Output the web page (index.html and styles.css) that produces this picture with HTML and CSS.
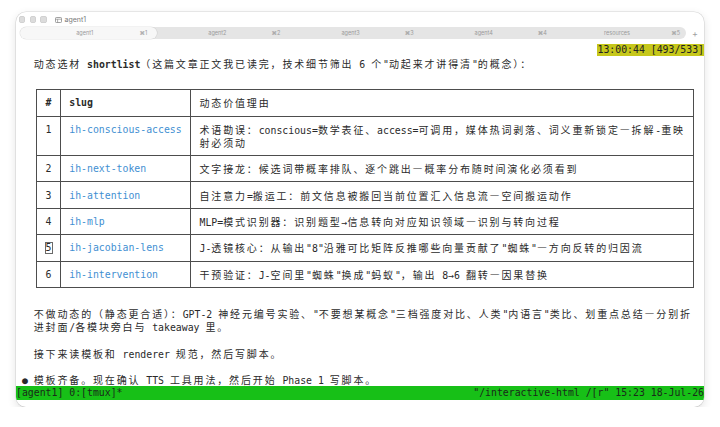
FILE: index.html
```html
<!DOCTYPE html>
<html lang="zh-CN">
<head>
<meta charset="utf-8">
<title>agent1</title>
<link rel="stylesheet" href="styles.css">
</head>
<body>
<div class="window">
  <div class="titlebar">
    <div class="lights"><span class="light"></span><span class="light"></span><span class="light"></span></div>
    <svg class="title-icon" width="7" height="6" viewBox="0 0 7 6"><rect x="0.5" y="0.5" width="6" height="5" rx="0.8" fill="none" stroke="#8a8a8a" stroke-width="0.8"/><path d="M0.5 2.2h6M2.6 2.2v3.3" stroke="#8a8a8a" stroke-width="0.7"/></svg>
    <span class="title">agent1</span>
  </div>
  <div class="tabbar">
    <div class="tabs">
      <div class="tab active"><span class="tab-name">agent1</span><span class="tab-key">⌘1</span></div>
      <div class="tab"><span class="tab-name">agent2</span><span class="tab-key">⌘2</span></div>
      <div class="tab"><span class="tab-name">agent3</span><span class="tab-key">⌘3</span></div>
      <div class="tab"><span class="tab-name">agent4</span><span class="tab-key">⌘4</span></div>
      <div class="tab"><span class="tab-name">resources</span><span class="tab-key">⌘5</span></div>
    </div>
    <span class="plus">+</span>
  </div>
  <div class="term">
<div class="line mode-row"><span class="mode">13:00:44 [493/533]</span></div>
<div class="line">   <span class="w">动态选材</span> <b>shortlist</b><span class="w">（这篇文章正文我已读完，技术细节筛出</span> 6 <span class="w">个</span>"<span class="w">动起来才讲得清</span>"<span class="w">的概念）：</span></div>
<div class="line"></div>
<div class="tbl">
<div class="cell hd"><div class="tl">#</div></div><div class="cell hd"><div class="tl">slug</div></div><div class="cell hd"><div class="tl"><span class="w">动态价值理由</span></div></div>
<div class="cell"><div class="tl">1</div></div><div class="cell slug"><div class="tl">ih-conscious-access</div></div><div class="cell"><div class="tl"><span class="w">术语勘误：</span>conscious=<span class="w">数学表征、</span>access=<span class="w">可调用，媒体热词剥落、词义重新锁定—拆解</span>-<span class="w">重映</span></div><div class="tl"><span class="w">射必须动</span></div></div>
<div class="cell"><div class="tl">2</div></div><div class="cell slug"><div class="tl">ih-next-token</div></div><div class="cell"><div class="tl"><span class="w">文字接龙：候选词带概率排队、逐个跳出—概率分布随时间演化必须看到</span></div></div>
<div class="cell"><div class="tl">3</div></div><div class="cell slug"><div class="tl">ih-attention</div></div><div class="cell"><div class="tl"><span class="w">自注意力</span>=<span class="w">搬运工：前文信息被搬回当前位置汇入信息流—空间搬运动作</span></div></div>
<div class="cell"><div class="tl">4</div></div><div class="cell slug"><div class="tl">ih-mlp</div></div><div class="cell"><div class="tl">MLP=<span class="w">模式识别器：识别题型</span>→<span class="w">信息转向对应知识领域—识别与转向过程</span></div></div>
<div class="cell"><div class="tl"><span class="cursor">5</span></div></div><div class="cell slug"><div class="tl">ih-jacobian-lens</div></div><div class="cell"><div class="tl">J-<span class="w">透镜核心：从输出</span>"8"<span class="w">沿雅可比矩阵反推哪些向量贡献了</span>"<span class="w">蜘蛛</span>"<span class="w">—方向反转的归因流</span></div></div>
<div class="cell"><div class="tl">6</div></div><div class="cell slug"><div class="tl">ih-intervention</div></div><div class="cell"><div class="tl"><span class="w">干预验证：</span>J-<span class="w">空间里</span>"<span class="w">蜘蛛</span>"<span class="w">换成</span>"<span class="w">蚂蚁</span>"<span class="w">，输出</span> 8→6 <span class="w">翻转—因果替换</span></div></div>
</div>
<div class="line"></div>
<div class="line">   <span class="w">不做动态的（静态更合适）：</span>GPT-2 <span class="w">神经元编号实验、</span>"<span class="w">不要想某概念</span>"<span class="w">三档强度对比、人类</span>"<span class="w">内语言</span>"<span class="w">类比、划重点总结—分别折</span></div>
<div class="line">   <span class="w">进封面</span>/<span class="w">各模块旁白与</span> takeaway <span class="w">里。</span></div>
<div class="line"></div>
<div class="line">   <span class="w">接下来读模板和</span> renderer <span class="w">规范，然后写脚本。</span></div>
<div class="line"></div>
<div class="line"> ● <span class="w">模板齐备。现在确认</span> TTS <span class="w">工具用法，然后开始</span> Phase 1 <span class="w">写脚本。</span></div>
<div class="line status"><span>[agent1] 0:[tmux]*</span><span>"/interactive-html /[r" 15:23 18-Jul-26</span></div>
  </div>
</div>
</body>
</html>
```
FILE: styles.css
```css
* { box-sizing: border-box; }
html, body { margin: 0; padding: 0; background: #ffffff; }
body {
  padding: 12px 16px 0 16px;
  font-family: "DejaVu Sans Mono", "Noto Sans CJK SC", monospace;
}
.window {
  width: 688px;
  height: 395px;
  border-radius: 10px;
  background: #ffffff;
  box-shadow: 0 0 0 0.5px rgba(0, 0, 0, 0.14), 0 3px 10px rgba(0, 0, 0, 0.12);
  overflow: hidden;
  display: flex;
  flex-direction: column;
}
.titlebar {
  height: 14px;
  padding-top: 1px;
  display: flex;
  align-items: center;
  padding-left: 3px;
}
.lights { display: flex; gap: 4.5px; }
.light {
  width: 6.2px;
  height: 6.2px;
  border-radius: 50%;
  background: #dcdcdc;
  box-shadow: inset 0 0 0 0.5px #c6c6c6;
}
.title-icon { margin-left: 8px; }
.title {
  margin-left: 3px;
  font: 7px "Inter", "Noto Sans", sans-serif;
  color: #7a7a7a;
}
.tabbar {
  height: 14px;
  display: flex;
  align-items: center;
  padding-left: 4px;
}
.tabs {
  width: 666px;
  height: 11.5px;
  border-radius: 6px;
  background: #e5e5e5;
  display: flex;
}
.tab {
  flex: 1;
  display: flex;
  align-items: center;
  padding-right: 6px;
  font: 5.5px "Inter", "Noto Sans", sans-serif;
  color: #9a9a9a;
}
.tab.active {
  background: #f7f7f7;
  border-radius: 6px;
  box-shadow: 0 0 0 0.5px rgba(0, 0, 0, 0.1);
  margin-right: -4px;
  padding-right: 10px;
  position: relative;
}
.tab-name { flex: 1; text-align: center; padding-left: 10px; }
.plus {
  width: 18px;
  text-align: center;
  font: 9px "Inter", "Noto Sans", sans-serif;
  color: #a0a0a0;
}
.term {
  padding-top: 3.5px;
  font-size: 9.83px;
  color: #2a2a2a;
}
.line {
  height: 13.2px;
  line-height: 13.2px;
  white-space: pre;
}
.w {
  font-family: "Noto Sans CJK SC", sans-serif;
  font-size: 10px;
  letter-spacing: 1.84px;
}
b { font-weight: bold; }
.mode-row { display: flex; justify-content: flex-end; }
.mode {
  background: #c6c71a;
  color: #222;
  height: 12.5px;
  line-height: 12.5px;
}
.tbl {
  margin: 6.1px 0 6.1px 20.22px;
  width: 658.12px;
  display: grid;
  grid-template-columns: 23.68px 130.24px 503.2px;
  border-right: 1px solid #4d4d4d;
  border-bottom: 1px solid #4d4d4d;
}
.cell {
  border-left: 1px solid #4d4d4d;
  border-top: 1px solid #4d4d4d;
  padding: 6.1px 0 6.1px 8.38px;
  white-space: pre;
}
.tl {
  height: 13.2px;
  line-height: 13.2px;
}
.hd { font-weight: bold; }
.hd .w { font-weight: normal; }
.slug { color: #3f8fd2; }
.cursor {
  display: inline-block;
  height: 10px;
  line-height: 10px;
  box-shadow: 0 0 0 1px #6a6a6a;
}
.status {
  background: #17c017;
  color: #1a2a1a;
  display: flex;
  justify-content: space-between;
}
```
